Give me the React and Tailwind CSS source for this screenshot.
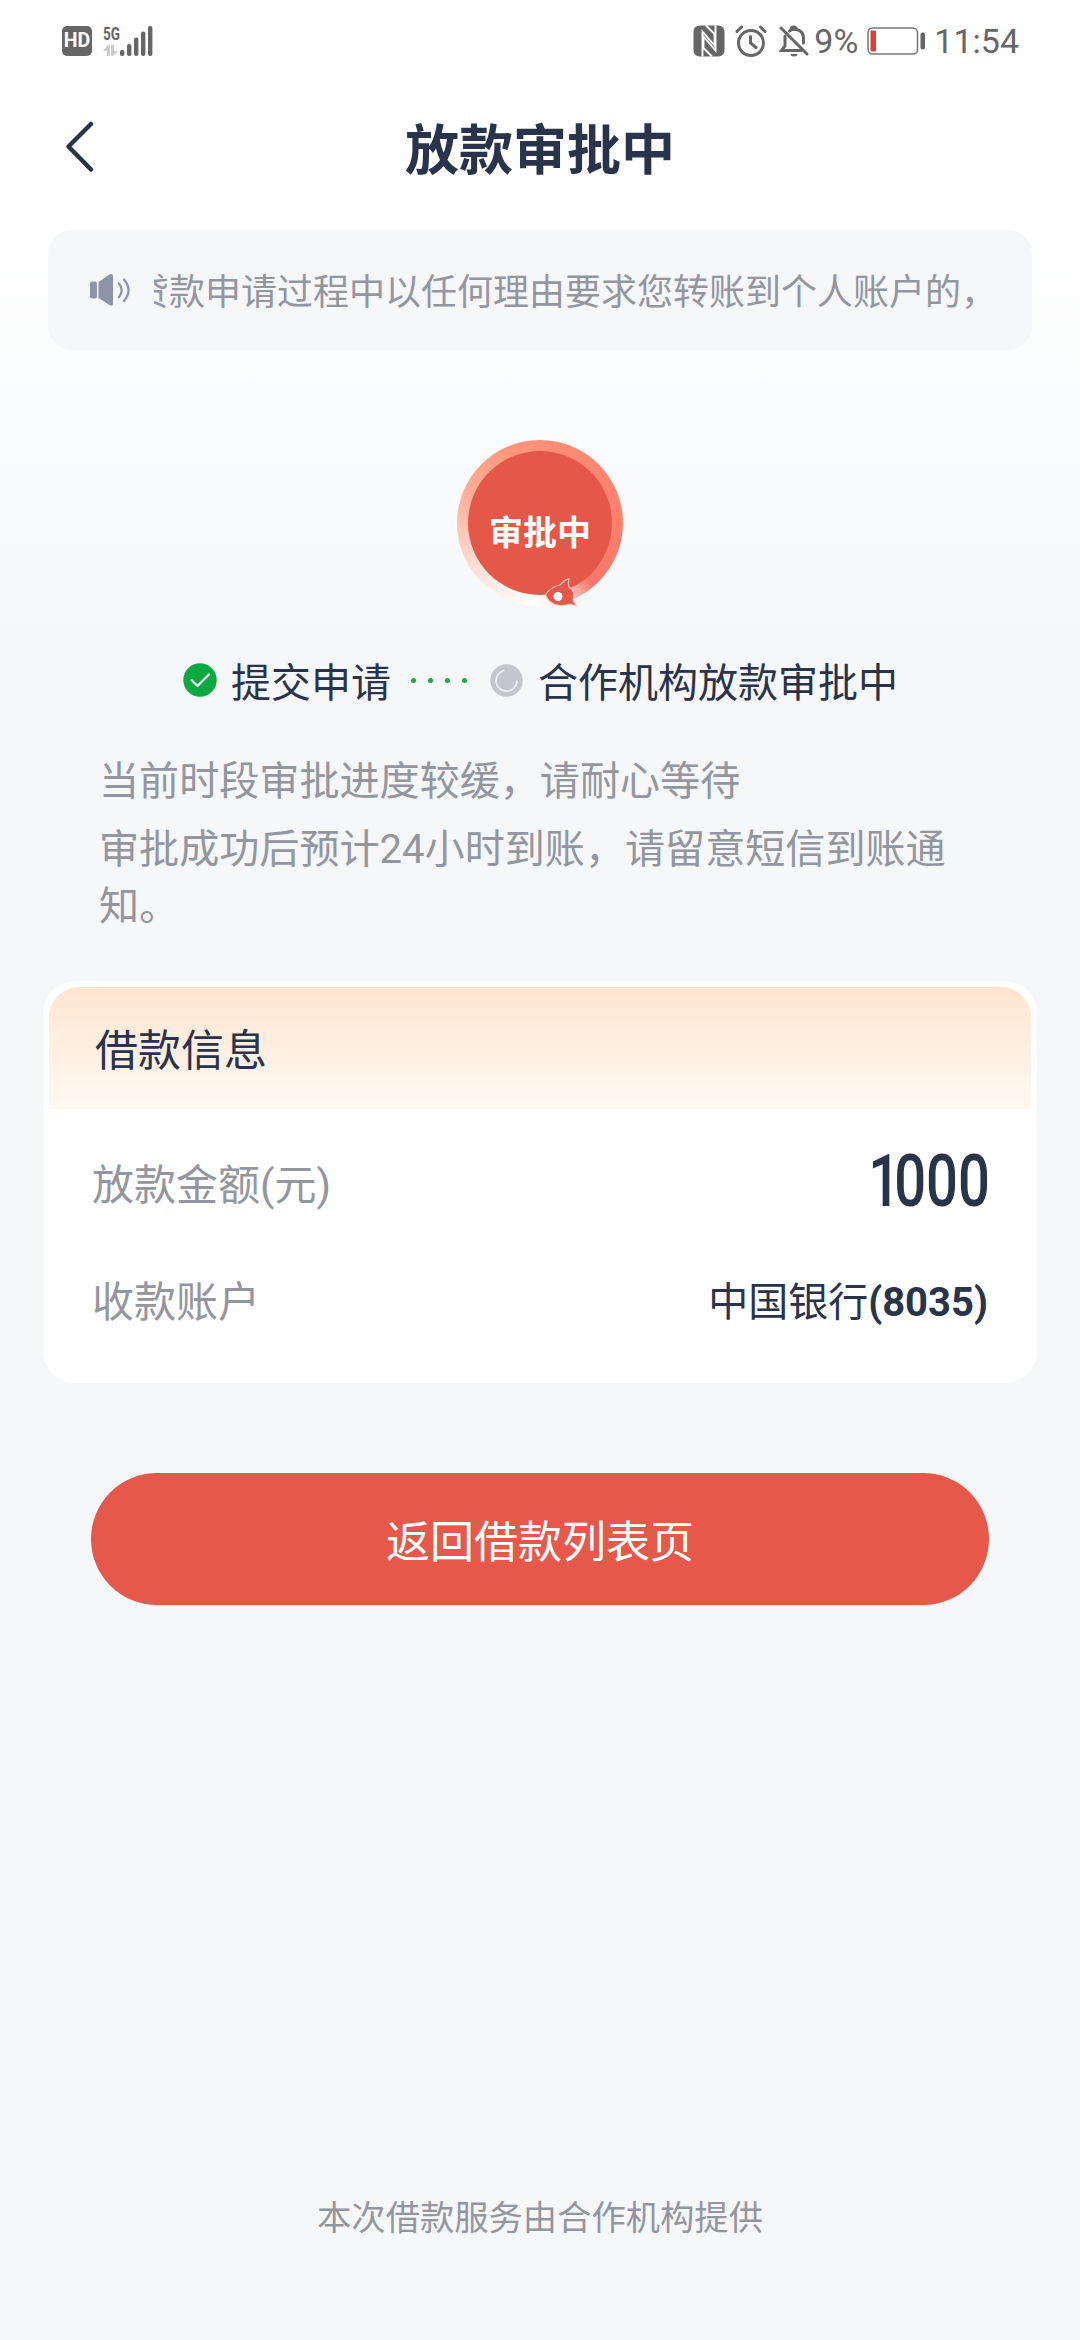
import React from 'react';

const StatusBar = () => (
  <div className="h-[82px] pl-[62px] pr-[61px] flex items-center justify-between text-[#666666]">
    <div className="flex items-center gap-[11px]">
      <div className="w-[30px] h-[30px] rounded-[5px] bg-[#666666] text-white text-[19.5px] font-bold font-['Roboto',sans-serif] flex items-center justify-center">
        HD
      </div>
      <svg className="overflow-visible" width="50" height="34" viewBox="0 -1 50 34" fill="currentColor">
        <text x="0" y="14.500" fontSize="19" fontWeight="700" textLength="17" lengthAdjust="spacingAndGlyphs" fontFamily="Roboto, sans-serif">5G</text>
        <path d="M0 26l5-6h2v11H4v-5zM8 20h3v6h4l-5 5H8z" fill="#cccccc" />
        <rect x="17" y="25" width="4.400" height="6" rx="2" />
        <rect x="24" y="19" width="4.400" height="12" rx="2" />
        <rect x="31" y="12.500" width="4.400" height="18.500" rx="2" />
        <rect x="38" y="6.500" width="4.400" height="24.500" rx="2" />
        <rect x="45" y="1" width="4.400" height="30" rx="2" />
      </svg>
    </div>
    <div className="flex items-center">
      {/* NFC */}
      <svg width="32" height="32" viewBox="0 0 32 32">
        <rect x="0.500" y="0.500" width="31" height="31" rx="6" fill="#666666" />
        <path d="M9.500 31.500V6.500l12 14V9L13 0.500M22.500 0.500v25l-12-14V23l8.500 8.500" fill="none" stroke="#fff" strokeWidth="1.900" />
      </svg>
      {/* Alarm */}
      <svg className="ml-[10px]" width="32" height="32" viewBox="0 0 32 32" fill="none" stroke="currentColor" strokeWidth="3" strokeLinecap="round">
        <circle cx="16" cy="18" r="12.500" />
        <path d="M15.500 11.500V18l5.500 4.500M2 6.500l4.500-4.500M30 6.500L25.500 2" />
      </svg>
      {/* Muted bell */}
      <svg className="ml-[12px]" width="30" height="32" viewBox="0 0 30 32" fill="none" stroke="currentColor" strokeWidth="3" strokeLinecap="round">
        <path d="M6 11v10L2.500 25.500H22M10.500 6C17 2 24.500 6 24.500 13v5" />
        <path d="M12 4.500a2.600 2.600 0 0 1 5.200 0M2 3l26 26" />
        <path d="M11.500 29h7a3.500 2.500 0 0 1-7 0z" fill="currentColor" stroke="none" />
      </svg>
      <span className="ml-[5px] text-[34px] leading-none font-['Roboto',sans-serif]">9%</span>
      <svg className="ml-[9px]" width="60" height="28" viewBox="0 0 60 28">
        <rect x="1" y="1" width="49.500" height="26" rx="4.500" fill="none" stroke="#777777" strokeWidth="1.500" />
        <rect x="3.500" y="3.500" width="5.500" height="21" rx="1" fill="#e33b2e" />
        <rect x="53.500" y="5.500" width="4.500" height="17" rx="2" fill="#666666" />
      </svg>
      <span className="ml-[7px] text-[34px] leading-none font-['Roboto',sans-serif]">11:54</span>
    </div>
  </div>
);

const Header = () => (
  <header className="relative h-[134px] pt-[6px] flex items-center justify-center">
    <svg className="absolute left-[64px] top-[38px]" width="32" height="54" viewBox="0 0 32 54" fill="none" stroke="#29334b" strokeWidth="4.500" strokeLinecap="round" strokeLinejoin="round">
      <path d="M27 4L4.500 26.500L27 49.500" />
    </svg>
    <h1 className="text-[54px] leading-[80px] font-bold">放款审批中</h1>
  </header>
);

const Notice = () => (
  <div className="mt-[14px] mx-12 h-[120px] rounded-[24px] bg-[#f5f7f9] pl-[42px] pr-[34px] flex items-center">
    <svg className="shrink-0" width="42" height="34" viewBox="0 0 42 34" fill="#8f94a8">
      <rect x="0" y="8.500" width="7" height="17" rx="2" />
      <path d="M8.500 9L19.500 1.500Q23 0 23 3.500V30.500Q23 34 19.500 32L8.500 25z" />
      <path d="M29 10.500q5.500 6.500 0 13.500M34 6.500q9 10.500 0 21.500" fill="none" stroke="#8f94a8" strokeWidth="2.300" strokeLinecap="round" />
    </svg>
    {/* Scrolling text, already partly past the left edge */}
    <div className="ml-[22px] pt-[5px] flex-1 overflow-hidden">
      <p className="-ml-[21px] text-[36px] leading-[54px] text-[#93969f] whitespace-nowrap">
        贷款申请过程中以任何理由要求您转账到个人账户的，
      </p>
    </div>
  </div>
);

const StatusBadge = () => (
  <div className="relative mx-auto mt-[85px] w-[176px] h-[176px]">
    <div className="absolute left-[5px] top-[5px] w-[166px] h-[166px] rounded-full bg-[conic-gradient(#ff8f76_0deg,#ff806c_90deg,#f8776a_140deg,#fff1ec_166deg,#ffffff_185deg,#fdeeea_215deg,#ffd3c6_250deg,#ffb09a_290deg,#ff9a80_330deg,#ff8f76_360deg)]" />
    <div className="absolute left-[16px] top-[16px] w-[144px] h-[144px] rounded-full bg-[#e55849] flex items-center justify-center">
      <span className="pt-[20px] text-[34px] leading-[50px] font-bold text-white">审批中</span>
    </div>
    <svg className="absolute left-[92px] top-[140px]" width="36" height="36" viewBox="0 0 36 36">
      <path d="M1.500 20C5 14 11 11 16 10C19 6 22 4.500 25 3.500C24 7 24.500 10 25 12C28 14 30 17 30 20L29 25L32.500 31L26 29C17 32 6 31 1.500 20z" fill="#e2584b" stroke="#ffc5b8" strokeWidth="1.200" strokeLinejoin="round" />
      <circle cx="14" cy="21.500" r="4.500" fill="#fff" />
    </svg>
  </div>
);

const Steps = () => (
  <div className="mt-[39px] pl-[183px] flex items-center text-[40px] leading-[60px]">
    <svg width="34" height="34" viewBox="0 0 34 34">
      <circle cx="17" cy="17" r="16.700" fill="#0ba941" />
      <path d="M8.500 17l6 6L26 11.500" fill="none" stroke="#fff" strokeWidth="2.200" strokeLinecap="round" strokeLinejoin="round" />
    </svg>
    <span className="ml-[14px] pt-[4px] -mb-[4px]">提交申请</span>
    <div className="ml-[20px] flex gap-[12px]">
      {[0, 1, 2, 3].map((i) => (
        <i key={i} className="w-[5px] h-[5px] rounded-full bg-[#1da750]" />
      ))}
    </div>
    <svg className="ml-[23px]" width="33" height="33" viewBox="0 0 33 33">
      <circle cx="16.500" cy="16.500" r="16.200" fill="#c5c6cc" />
      <path d="M14 6.500A10.500 10.500 0 1 0 27 17" fill="none" stroke="#eeeff2" strokeWidth="1.700" strokeLinecap="round" />
    </svg>
    <span className="ml-[15px] pt-[4px] -mb-[4px]">合作机构放款审批中</span>
  </div>
);

const LoanCard = () => (
  <section className="mt-[46px] mx-[43px] h-[402px] rounded-[32px] bg-white p-[6px]">
    <h2 className="h-[122px] rounded-t-[30px] bg-linear-to-b from-[#fee5d0] to-[#fff9f2] pl-[46px] pt-[3px] text-[43px] leading-[122px]">
      借款信息
    </h2>
    <div className="px-[43px] mt-[18px]">
      <div className="h-[117px] flex items-center justify-between">
        <span className="text-[42px] text-[#93969f]">放款金额(元)</span>
        <span className="mb-[8px] -mr-[2px] origin-right scale-x-[0.77] text-[73px] leading-none font-medium font-['Roboto',sans-serif]">
          <span className="tracking-[-8px]">1</span>000
        </span>
      </div>
      <div className="h-[117px] flex items-center justify-between">
        <span className="text-[42px] text-[#93969f]">收款账户</span>
        <span className="text-[40px]">
          中国银行<b>(8035)</b>
        </span>
      </div>
    </div>
  </section>
);

export default function App() {
  return (
    <div className="w-[1080px] h-[2340px] flex flex-col overflow-hidden text-[#29334b] bg-[linear-gradient(to_bottom,#ffffff_220px,#f5f7f9_660px)] font-['Roboto','Noto_Sans_CJK_SC',sans-serif]">
      <StatusBar />
      <Header />
      <Notice />
      <StatusBadge />
      <Steps />
      <div className="mt-[43px] pl-[99px] pr-[100px] text-[40.1px] leading-[57px] text-[#93969f]">
        <p>当前时段审批进度较缓，请耐心等待</p>
        <p className="mt-[11px]">审批成功后预计24小时到账，请留意短信到账通知。</p>
      </div>
      <LoanCard />
      <button className="mt-[90px] mx-[91px] h-[132px] pt-[7px] shrink-0 rounded-full bg-[#e65849] text-white text-[44px]">
        返回借款列表页
      </button>
      <footer className="mt-auto mb-[96px] text-center text-[34.3px] leading-[51px] text-[#93969f]">
        本次借款服务由合作机构提供
      </footer>
    </div>
  );
}
